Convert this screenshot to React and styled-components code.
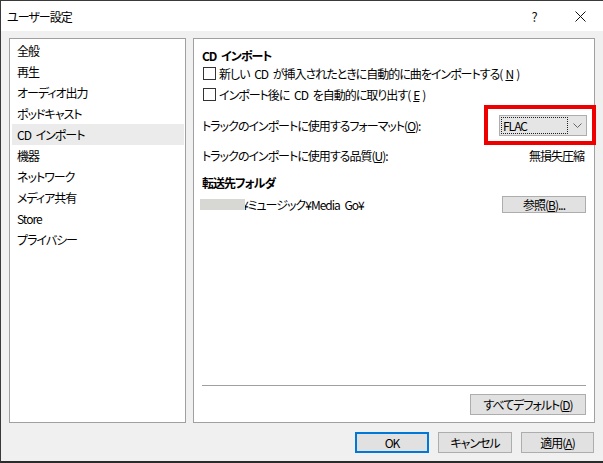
import React from "react";
import styled, { createGlobalStyle } from "styled-components";

const GlobalStyle = createGlobalStyle`
  html, body {
    margin: 0;
    padding: 0;
    background: #2b2b2b;
  }
  body {
    font-family: "Noto Sans CJK JP", "Noto Sans", sans-serif;
    font-size: 12px;
    font-feature-settings: "palt";
    letter-spacing: -1px;
    word-spacing: 3px;
    color: #000;
  }
`;

const Window = styled.div`
  width: 602px;
  height: 460px;
  border-top: 1px solid #3a3a3a;
  border-left: 1px solid #3a3a3a;
  border-bottom: 2px solid #2b2b2b;
  background: #f0f0f0;
  display: flex;
  flex-direction: column;
  overflow: hidden;
`;

const TitleBar = styled.div`
  height: 30px;
  background: #fff;
  display: flex;
  align-items: center;
  padding-left: 6px;
`;

const Title = styled.div`
  flex: 1;
  font-size: 12px;
`;

const TitleButton = styled.div`
  width: 46px;
  height: 30px;
  display: flex;
  align-items: center;
  justify-content: center;
  font-size: 13px;
  color: #111;
`;

const Body = styled.div`
  flex: 1;
  display: flex;
  flex-direction: column;
  padding: 7px 8px 0 8px;
`;

const Panels = styled.div`
  display: flex;
  gap: 7px;
  height: 385px;
`;

const Panel = styled.div`
  box-sizing: border-box;
  height: 100%;
  width: ${(p) => p.$width}px;
  background: #fff;
  border: 1px solid #a0a0a0;
`;

const List = styled.div`
  display: flex;
  flex-direction: column;
  padding: 1px 1px 0 2px;
`;

const ListItem = styled.div`
  height: 21px;
  display: flex;
  align-items: center;
  padding-left: 5px;
  background: ${(p) => (p.$active ? "#ebebeb" : "transparent")};
`;

const Content = styled.div`
  height: 100%;
  box-sizing: border-box;
  display: flex;
  flex-direction: column;
  padding: 7px 8px 7px 8px;
`;

const Heading = styled.div`
  height: 18px;
  display: flex;
  align-items: center;
  font-weight: bold;
  margin-top: ${(p) => p.$mt || 0}px;
`;

const CheckRow = styled.label`
  height: 19px;
  display: flex;
  align-items: center;
  gap: 3px;
  margin-top: ${(p) => p.$mt || 0}px;
`;

const CheckBox = styled.span`
  width: 11px;
  height: 11px;
  border: 1px solid #333;
  background: #fff;
  flex-shrink: 0;
  margin-left: 1px;
`;

const U = styled.span`
  text-decoration: underline;
`;

const FieldRow = styled.div`
  height: ${(p) => p.$h}px;
  display: flex;
  align-items: center;
  justify-content: space-between;
  margin-top: ${(p) => p.$mt || 0}px;
`;

const Value = styled.span`
  margin-right: 2px;
`;

const SelectWrap = styled.div`
  position: relative;
  margin-right: -1px;
`;

const Select = styled.div`
  width: 85px;
  height: 19px;
  box-sizing: content-box;
  border: 1px solid #adadad;
  background: #e5e5e5;
  display: flex;
  align-items: center;
  padding-left: 1px;
`;

const Focus = styled.div`
  width: 64px;
  height: 15px;
  border: 1px dotted #222;
  display: flex;
  align-items: center;
  padding-left: 1px;
`;

const Chevron = styled.div`
  flex: 1;
  display: flex;
  justify-content: center;
`;

const Highlight = styled.div`
  position: absolute;
  top: -10px;
  left: -15px;
  right: -9px;
  bottom: -9px;
  border: 4px solid #ee0000;
`;

const PathRow = styled.div`
  height: 18px;
  display: flex;
  align-items: center;
  margin-top: 4px;
`;

const Masked = styled.span`
  width: 45px;
  height: 11px;
  background: #d7d7d3;
  position: relative;
  z-index: 1;
  margin-left: -2px;
`;

const PathText = styled.span`
  flex: 1;
  margin-left: -3px;
`;

const Button = styled.div`
  box-sizing: border-box;
  width: ${(p) => p.$w}px;
  height: ${(p) => p.$h || 21}px;
  background: #e1e1e1;
  border: ${(p) => (p.$primary ? "2px solid #0078d7" : "1px solid #adadad")};
  display: flex;
  align-items: center;
  justify-content: center;
`;

const Spacer = styled.div`
  flex: 1;
`;

const Separator = styled.div`
  height: 1px;
  background: #a0a0a0;
  margin-bottom: 8px;
`;

const BottomRow = styled.div`
  display: flex;
  justify-content: flex-end;
`;

const Footer = styled.div`
  display: flex;
  justify-content: flex-end;
  gap: 9px;
  margin-top: 9px;
  padding-right: 1px;
`;

const categories = [
  "全般",
  "再生",
  "オーディオ出力",
  "ポッドキャスト",
  "CD インポート",
  "機器",
  "ネットワーク",
  "メディア共有",
  "Store",
  "プライバシー",
];

export default function App() {
  return (
    <>
      <GlobalStyle />
      <Window>
        <TitleBar>
          <Title>ユーザー設定</Title>
          <TitleButton>?</TitleButton>
          <TitleButton>
            <svg width="11" height="11" viewBox="0 0 11 11">
              <path d="M0.5 0.5 L10.5 10.5 M10.5 0.5 L0.5 10.5" stroke="#111" strokeWidth="1" />
            </svg>
          </TitleButton>
        </TitleBar>
        <Body>
          <Panels>
            <Panel $width={177}>
              <List>
                {categories.map((c) => (
                  <ListItem key={c} $active={c === "CD インポート"}>
                    {c}
                  </ListItem>
                ))}
              </List>
            </Panel>
            <Panel $width={402}>
              <Content>
                <Heading>CD インポート</Heading>
                <CheckRow>
                  <CheckBox />
                  新しい CD が挿入されたときに自動的に曲をインポートする(<U>N</U>)
                </CheckRow>
                <CheckRow $mt={2}>
                  <CheckBox />
                  インポート後に CD を自動的に取り出す(<U>E</U>)
                </CheckRow>
                <FieldRow $h={21} $mt={11}>
                  <span>
                    トラックのインポートに使用するフォーマット(<U>O</U>):
                  </span>
                  <SelectWrap>
                    <Select>
                      <Focus>FLAC</Focus>
                      <Chevron>
                        <svg width="9" height="5" viewBox="0 0 9 5">
                          <path d="M0.5 0.5 L4.5 4.5 L8.5 0.5" fill="none" stroke="#666" strokeWidth="1" />
                        </svg>
                      </Chevron>
                    </Select>
                    <Highlight />
                  </SelectWrap>
                </FieldRow>
                <FieldRow $h={20} $mt={9}>
                  <span>
                    トラックのインポートに使用する品質(<U>U</U>):
                  </span>
                  <Value>無損失圧縮</Value>
                </FieldRow>
                <Heading $mt={8}>転送先フォルダ</Heading>
                <PathRow>
                  <Masked />
                  <PathText>¥ミュージック¥Media Go¥</PathText>
                  <Button $w={84} $h={17}>
                    参照(<U>B</U>)...
                  </Button>
                </PathRow>
                <Spacer />
                <Separator />
                <BottomRow>
                  <Button $w={116} $h={21}>
                    すべてデフォルト(<U>D</U>)
                  </Button>
                </BottomRow>
              </Content>
            </Panel>
          </Panels>
          <Footer>
            <Button $w={74} $primary>
              OK
            </Button>
            <Button $w={74}>キャンセル</Button>
            <Button $w={73}>
              適用(<U>A</U>)
            </Button>
          </Footer>
        </Body>
      </Window>
    </>
  );
}
